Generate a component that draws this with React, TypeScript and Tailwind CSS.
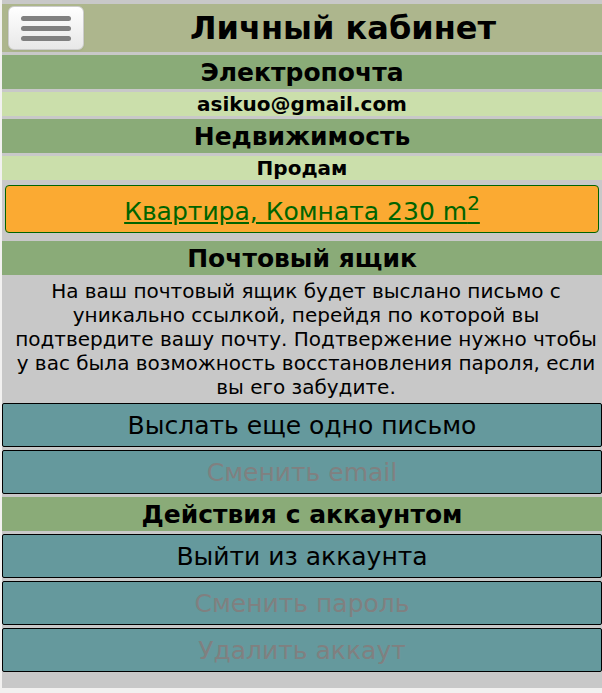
import React from "react";

function Title({ children }: { children: React.ReactNode }) {
  return <h2 className="mb-[3px] bg-[#8aab78] pt-0.5 text-center text-[25px] leading-8 font-bold">{children}</h2>;
}

function Value({ children }: { children: React.ReactNode }) {
  return <p className="mb-[3px] bg-[#cbdfab] text-center text-xl leading-6 font-bold">{children}</p>;
}

function Action({ children, disabled }: { children: React.ReactNode; disabled?: boolean }) {
  return (
    <button
      type="button"
      disabled={disabled}
      className="mb-[3px] block w-full rounded-xs border border-black bg-[#65999d] pt-0.5 text-center text-[25px] leading-10 text-black disabled:text-[#808080]"
    >
      {children}
    </button>
  );
}

export default function App() {
  return (
    <div className="min-h-screen bg-[#f2f1f0] pb-[5px] font-['DejaVu_Sans',sans-serif] text-black">
      <main className="border-l-2 border-[#f2f1f0] bg-[#c8c8c8] pt-1 pb-[13px]">
        <header className="mb-[3px] flex h-12 items-center bg-[#adb68d] pl-1.5">
          <button
            type="button"
            aria-label="Меню"
            className="flex h-11 w-19 shrink-0 flex-col items-center justify-center gap-[5px] rounded-md border border-[#ccc] bg-linear-to-b from-white to-[#e8e8e8] shadow-xs"
          >
            <span className="h-[5px] w-[50px] rounded-sm bg-[#808080]" />
            <span className="h-[5px] w-[50px] rounded-sm bg-[#808080]" />
            <span className="h-[5px] w-[50px] rounded-sm bg-[#808080]" />
          </button>
          <h1 className="flex-1 text-center text-[32px] leading-[48px] font-bold">Личный кабинет</h1>
        </header>
        <Title>Электропочта</Title>
        <Value>asikuo@gmail.com</Value>
        <Title>Недвижимость</Title>
        <Value>Продам</Value>
        <div className="px-[3px] pt-0.5 pb-2">
          <a
            href="#listing"
            className="block h-12 rounded-sm border border-[#006400] bg-[#fbaa32] pt-0.5 text-center text-[25px] leading-12 text-[#006400] underline"
          >
            Квартира, Комната 230 m<sup className="text-[20px]">2</sup>
          </a>
        </div>
        <Title>Почтовый ящик</Title>
        <p className="pt-px pr-1 pb-1 pl-3 text-center text-xl leading-6">
          На ваш почтовый ящик будет выслано письмо с уникально ссылкой, перейдя по которой вы подтвердите вашу почту. Подтвержение нужно чтобы у вас была возможность восстановления пароля, если вы его забудите.
        </p>
        <Action>Выслать еще одно письмо</Action>
        <Action disabled>Сменить email</Action>
        <Title>Действия с аккаунтом</Title>
        <Action>Выйти из аккаунта</Action>
        <Action disabled>Сменить пароль</Action>
        <Action disabled>Удалить аккаут</Action>
      </main>
    </div>
  );
}
